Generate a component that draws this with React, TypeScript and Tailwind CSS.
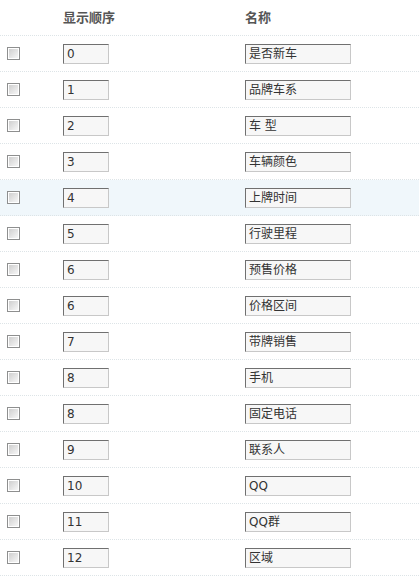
import React from "react";

const rows: [string, string][] = [
  ["0", "是否新车"],
  ["1", "品牌车系"],
  ["2", "车 型"],
  ["3", "车辆颜色"],
  ["4", "上牌时间"],
  ["5", "行驶里程"],
  ["6", "预售价格"],
  ["6", "价格区间"],
  ["7", "带牌销售"],
  ["8", "手机"],
  ["8", "固定电话"],
  ["9", "联系人"],
  ["10", "QQ"],
  ["11", "QQ群"],
  ["12", "区域"],
];

const font = {
  fontFamily:
    'Tahoma, "DejaVu Sans", "Noto Sans CJK SC", sans-serif',
};

function CheckBox() {
  return (
    <div className="w-[13px] h-[13px] border border-[#8e8f8f] bg-white p-[1px] box-border">
      <div className="w-full h-full bg-gradient-to-br from-[#cfcfcf] to-[#f7f7f7]" />
    </div>
  );
}

function Field({ value, w }: { value: string; w: string }) {
  return (
    <div
      className={`${w} h-[20px] box-border border border-t-[#707070] border-l-[#707070] border-r-[#c8c8c8] border-b-[#c8c8c8] bg-[#f7f7f7] pl-[3px] flex items-center text-[12px] text-[#333] leading-none whitespace-pre`}
    >
      {value}
    </div>
  );
}

export default function App() {
  return (
    <div className="w-[419px] bg-white" style={font}>
      <div className="grid grid-cols-[57px_183px_1fr] h-9 box-border border-b border-dotted border-[#dde4e7]">
        <div />
        <div className="pl-[6px] flex items-center text-[13px] font-bold text-[#555]">
          显示顺序
        </div>
        <div className="pl-[5px] flex items-center text-[13px] font-bold text-[#555]">
          名称
        </div>
      </div>
      {rows.map(([n, name], i) => (
        <div
          key={i}
          className={`grid grid-cols-[57px_183px_1fr] h-9 box-border border-b border-dotted border-[#dde4e7] ${
            i === 4 ? "bg-[#f0f7fb]" : ""
          }`}
        >
          <div className="pl-[7px] flex items-center">
            <CheckBox />
          </div>
          <div className="pl-[6px] flex items-center">
            <Field value={n} w="w-[46px]" />
          </div>
          <div className="pl-[5px] flex items-center">
            <Field value={name} w="w-[106px]" />
          </div>
        </div>
      ))}
    </div>
  );
}
